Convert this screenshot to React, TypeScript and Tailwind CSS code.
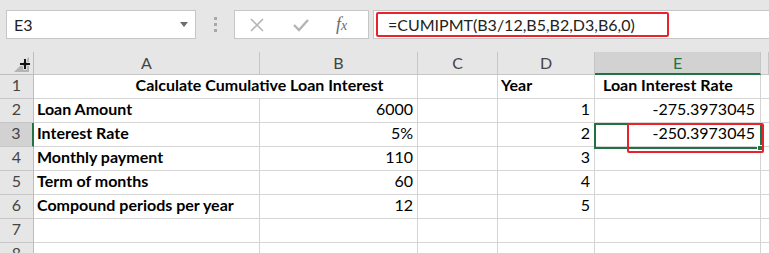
import React from "react";

const font = { fontFamily: "Lato, 'Open Sans', sans-serif" };

const cols = ["A", "B", "C", "D", "E", ""];

type Row = { n: number; a?: string; b?: string; d?: string; e?: string; title?: boolean };

const rows: Row[] = [
  { n: 1, title: true, d: "Year", e: "Loan Interest Rate" },
  { n: 2, a: "Loan Amount", b: "6000", d: "1", e: "-275.3973045" },
  { n: 3, a: "Interest Rate", b: "5%", d: "2", e: "-250.3973045" },
  { n: 4, a: "Monthly payment", b: "110", d: "3" },
  { n: 5, a: "Term of months", b: "60", d: "4" },
  { n: 6, a: "Compound periods per year", b: "12", d: "5" },
  { n: 7 },
  { n: 8 },
];

const FormulaBar = () => (
  <div className="relative h-[52px] bg-[#e6e6e6]">
    <div className="flex items-start pt-[10px]">
      <div className="ml-[6px] flex h-[29px] w-[190px] items-center justify-between border border-[#c6c6c6] bg-white pl-[7px] pr-[7px] text-[16px] text-[#222]">
        <span>E3</span>
        <svg width="8" height="5" viewBox="0 0 8 5">
          <path d="M0 0 L8 0 L4 5 Z" fill="#6b6b6b" />
        </svg>
      </div>
      <div className="flex w-[38px] flex-col items-center gap-[3px] pt-[7px]">
        <span className="h-[3px] w-[3px] bg-[#a8a8a8]" />
        <span className="h-[3px] w-[3px] bg-[#a8a8a8]" />
        <span className="h-[3px] w-[3px] bg-[#a8a8a8]" />
      </div>
      <div className="flex h-[29px] w-[135px] items-center border border-[#c6c6c6] bg-white">
        <svg width="14" height="14" viewBox="0 0 14 14" className="ml-[15px]">
          <path d="M1 1 L13 13 M13 1 L1 13" stroke="#b4b4b4" strokeWidth="1.6" />
        </svg>
        <svg width="16" height="14" viewBox="0 0 16 14" className="ml-[29px]">
          <path d="M1 7 L6 12 L15 2" stroke="#b4b4b4" strokeWidth="2.4" fill="none" />
        </svg>
        <span
          className="ml-[27px] text-[18px] italic text-[#6b6b6b]"
          style={{ fontFamily: "'Liberation Serif', serif" }}
        >
          f<span className="text-[14px]">x</span>
        </span>
      </div>
      <div className="ml-[4px] flex h-[29px] flex-1 items-center border border-r-0 border-[#c6c6c6] bg-white pl-[14px] text-[16px] text-[#222]">
        =CUMIPMT(B3/12,B5,B2,D3,B6,0)
      </div>
    </div>
    <div className="absolute left-[376px] top-[12px] h-[25px] w-[293px] rounded-[2px] border-2 border-[#e8232b]" />
  </div>
);

const Corner = () => (
  <div className="relative h-[23px] border-r border-b border-[#bdbdbd] bg-[#e6e6e6]">
    <svg width="34" height="23" viewBox="0 0 34 23" className="absolute left-0 top-0">
      <path d="M14 20 L29 20 L29 5 Z" fill="#b4b4b4" />
      <path
        d="M23.5 6.5 h3 v4 h4 v3 h-4 v4 h-3 v-4 h-4 v-3 h4 Z"
        fill="#111"
        stroke="#fff"
        strokeWidth="0.8"
      />
    </svg>
  </div>
);

export default function App() {
  return (
    <div className="h-[253px] w-[769px] overflow-hidden bg-white" style={font}>
      <FormulaBar />
      <div className="relative">
        <div className="grid grid-cols-[34px_226px_158px_80px_97px_166px_1fr]">
          <Corner />
          {cols.map((c, i) => (
            <div
              key={i}
              className={
                c === "E"
                  ? "flex h-[23px] items-center justify-center border-r border-b-2 border-r-[#c6c6c6] border-b-[#217346] bg-[#d2d2d2] text-[16px] text-[#217346]"
                  : "flex h-[23px] items-center justify-center border-r border-b border-[#c6c6c6] bg-[#e6e6e6] text-[16px] text-[#444]"
              }
            >
              {c}
            </div>
          ))}
          {rows.map((r) => (
            <React.Fragment key={r.n}>
              <div
                className={
                  r.n === 3
                    ? "flex h-[24px] items-end justify-center border-b border-r-2 border-b-[#c6c6c6] border-r-[#217346] bg-[#d2d2d2] pb-[1px] text-[16px] text-[#444]"
                    : "flex h-[24px] items-end justify-center border-r border-b border-r-[#bdbdbd] border-b-[#c6c6c6] bg-[#e6e6e6] pb-[1px] text-[16px] text-[#444]"
                }
              >
                {r.n}
              </div>
              {r.title ? (
                <div className="col-span-2 flex h-[24px] items-end justify-center border-r border-b border-[#d4d4d4] pb-[1px] pl-[68px] text-[16px] font-bold whitespace-nowrap text-black">
                  Calculate Cumulative Loan Interest
                </div>
              ) : (
                <>
                  <div className="flex h-[24px] items-end border-r border-b border-[#d4d4d4] pb-[1px] pl-[3px] text-[16px] font-bold text-black">
                    {r.a}
                  </div>
                  <div className="flex h-[24px] items-end justify-end border-r border-b border-[#d4d4d4] pb-[1px] pr-[4px] text-[16px] text-black">
                    {r.b}
                  </div>
                </>
              )}
              <div className="h-[24px] border-r border-b border-[#d4d4d4]" />
              <div
                className={
                  r.title
                    ? "flex h-[24px] items-end border-r border-b border-[#d4d4d4] pb-[1px] pl-[3px] text-[16px] font-bold text-black"
                    : "flex h-[24px] items-end justify-end border-r border-b border-[#d4d4d4] pb-[1px] pr-[4px] text-[16px] text-black"
                }
              >
                {r.d}
              </div>
              <div
                className={
                  r.title
                    ? "flex h-[24px] items-end border-r border-b border-[#d4d4d4] pb-[1px] pl-[8px] text-[16px] font-bold text-black"
                    : "flex h-[24px] items-end justify-end border-r border-b border-[#d4d4d4] pb-[1px] pr-[5px] text-[16px] text-black"
                }
              >
                {r.e}
              </div>
              <div className="h-[24px] border-b border-[#d4d4d4]" />
            </React.Fragment>
          ))}
        </div>
        {/* active cell E3 */}
        <div className="absolute left-[594px] top-[71px] h-[26px] w-[168px] border-2 border-[#217346]" />
        <div className="absolute left-[757px] top-[93px] h-[6px] w-[6px] border border-white bg-[#217346]" />
        {/* red highlight */}
        <div className="absolute left-[627px] top-[71px] h-[30px] w-[137px] rounded-[2px] border-2 border-[#e8232b]" />
      </div>
    </div>
  );
}
